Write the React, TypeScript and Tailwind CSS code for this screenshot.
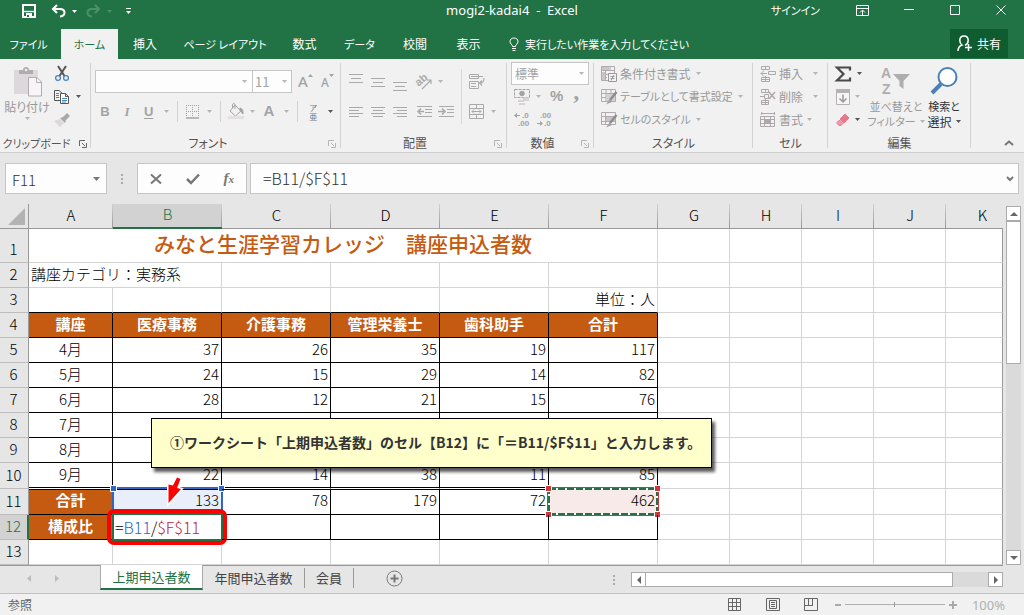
import React from "react";

type Kids = { children?: React.ReactNode };

const UI = "font-['Noto_Sans_CJK_JP','Noto_Sans',sans-serif] [font-feature-settings:'palt']";

function Icon({ w = 16, h = 16, children }: Kids & { w?: number; h?: number }) {
  return (
    <svg width={w} height={h} viewBox={`0 0 ${w} ${h}`} fill="none" stroke="currentColor" className="shrink-0 overflow-visible" aria-hidden="true">
      {children}
    </svg>
  );
}

function Caret({ dark = false }: { dark?: boolean }) {
  return (
    <svg width="5" height="3" viewBox="0 0 5 3" className={dark ? "shrink-0 fill-[#555]" : "shrink-0 fill-[#b5b5b5]"} aria-hidden="true">
      <path d="M0 0H5L2.5 3Z" />
    </svg>
  );
}

function Tool({ label, className = "", children }: Kids & { label: string; className?: string }) {
  return (
    <button type="button" aria-label={label} className={`flex h-[23px] shrink-0 items-center ${className}`}>
      {children}
    </button>
  );
}

function Launcher({ dark = false }: { dark?: boolean }) {
  return (
    <button type="button" aria-label="詳細" className={dark ? "absolute right-1 bottom-1 text-[#666]" : "absolute right-[5px] bottom-1 text-[#b5b5b5]"}>
      <Icon w={8} h={8}>
        <path d="M0.5 6V0.5H6M3 3L6 6M7.5 3V7.5H3" />
      </Icon>
    </button>
  );
}

function Group({ label, width, launcher, children }: Kids & { label: string; width: string; launcher?: "dark" | "light" }) {
  return (
    <section aria-label={label} className={`relative flex shrink-0 flex-col ${width}`}>
      <div className="flex h-[72px] pt-[3px]">{children}</div>
      <div className={`flex h-[21px] items-end justify-center leading-[18px] whitespace-nowrap text-[#555] ${label.length > 4 ? "text-[11px]" : "text-xs"}`}>{label}</div>
      {launcher && <Launcher dark={launcher === "dark"} />}
      <div className="absolute top-1 right-0 bottom-1 w-px bg-[#d2d2d2]" />
    </section>
  );
}

function Sep({ tall = false }: { tall?: boolean }) {
  return <div className={tall ? "h-[55px] w-px shrink-0 bg-[#d8d8d8]" : "h-[21px] w-px shrink-0 bg-[#d2d2d2]"} />;
}

function Lines({ y, xs }: { y: number; xs: [number, number][] }) {
  return (
    <Icon>
      {xs.map(([a, b], i) => (
        <path key={i} d={`M${a} ${y + i * 4 - 0.5}H${b}`} />
      ))}
    </Icon>
  );
}

function TitleBar() {
  return (
    <header className="relative flex h-[29px] items-start justify-between text-xs text-white">
      <div className="flex h-[22px] items-center pl-[22px]">
        <button type="button" aria-label="上書き保存">
          <Icon w={14} h={14}>
            <path d="M1 1H13V13H1Z" strokeWidth="2" />
            <path d="M2 7.5H12" strokeWidth="1.4" />
            <path d="M4 9H10V14H4Z" fill="white" stroke="none" />
            <path d="M5 11H7V13H5Z" fill="#217346" stroke="none" />
          </Icon>
        </button>
        <button type="button" aria-label="元に戻す" className="ml-[15px] flex items-center gap-[6px]">
          <Icon w={15} h={14}>
            <path d="M6 1L2 5L6 9M2 5H9C15 5 15 12 9 12.5" strokeWidth="2" />
          </Icon>
          <svg width="5" height="3" aria-hidden="true"><path d="M0 0H5L2.5 3Z" fill="white" /></svg>
        </button>
        <button type="button" aria-label="やり直し" className="ml-[9px] flex items-center gap-[6px] text-[#4c9069]">
          <Icon w={15} h={14}>
            <path d="M9 1L13 5L9 9M13 5H6C0 5 0 12 6 12.5" strokeWidth="2" />
          </Icon>
          <svg width="5" height="3" aria-hidden="true"><path d="M0 0H5L2.5 3Z" fill="currentColor" /></svg>
        </button>
        <button type="button" aria-label="クイック アクセス ツール バーのユーザー設定" className="ml-[14px]">
          <Icon w={5} h={7}>
            <path d="M0 0.5H5" />
            <path d="M0 3H5L2.5 6Z" fill="white" stroke="none" />
          </Icon>
        </button>
      </div>
      <h1 className="absolute top-0 left-1/2 -translate-x-1/2 text-[13px] leading-5 font-['Noto_Sans',sans-serif] whitespace-pre">mogi2-kadai4  -  Excel</h1>
      <div className="flex h-5 items-center">
        <button type="button" className="mr-9 text-[11px]">サインイン</button>
        <button type="button" aria-label="リボンの表示オプション" className="mr-[35px]">
          <Icon w={13} h={11}>
            <path d="M0.5 0.5H12.5V10.5H0.5ZM0.5 3.5H12.5M6.5 10V5.5M4 7.5L6.5 5L9 7.5" />
          </Icon>
        </button>
        <button type="button" aria-label="最小化" className="mr-9">
          <Icon w={10} h={10}><path d="M0 4.5H10" /></Icon>
        </button>
        <button type="button" aria-label="最大化" className="mr-9">
          <Icon w={10} h={10}><path d="M0.5 0.5H9.5V9.5H0.5Z" /></Icon>
        </button>
        <button type="button" aria-label="閉じる" className="mr-[18px]">
          <Icon w={10} h={10}><path d="M0.5 0.5L9.5 9.5M9.5 0.5L0.5 9.5" /></Icon>
        </button>
      </div>
    </header>
  );
}

const TABS: [string, string][] = [
  ["挿入", "w-[54px] text-xs"],
  ["ページ レイアウト", "w-[106px] text-[11px]"],
  ["数式", "w-[53px] text-xs"],
  ["データ", "w-[57px] text-[11px]"],
  ["校閲", "w-[54px] text-xs"],
  ["表示", "w-[53px] text-xs"],
];

function TabBar() {
  return (
    <nav aria-label="リボン タブ" className="flex h-[30px] text-xs text-white">
      <button type="button" className="w-[61px] pr-1 text-[11px]">ファイル</button>
      <button type="button" className="w-[57px] bg-[#f1f1f1] text-[11px] text-[#217346]">ホーム</button>
      {TABS.map(([name, width]) => (
        <button key={name} type="button" className={`${width} whitespace-nowrap`}>{name}</button>
      ))}
      <button type="button" className="ml-[14px] flex items-center gap-[6px] text-[11px] whitespace-nowrap">
        <Icon w={10} h={14}>
          <path d="M3.5 9.5C3.5 7.5 1 7 1 4.5C1 2.3 2.8 1 5 1S9 2.3 9 4.5C9 7 6.5 7.5 6.5 9.5ZM3 11.5H7M3.5 13.5H6.5" />
        </Icon>
        <span>実行したい作業を入力してください</span>
      </button>
      <button type="button" className="mr-4 ml-auto flex h-[29px] w-[58px] items-center justify-center gap-1 bg-[#0f5c30]">
        <Icon w={16} h={17}>
          <path d="M1 16C1 12.5 2.5 11 5 10C3.500 9 2.800 7.500 2.800 5.500C2.800 2.800 4.500 1 7 1S11.200 2.800 11.200 5.500C11.200 7.500 10.500 9 8 10.300M8 12.500H15M11.500 9V16" strokeWidth="1.5" />
        </Icon>
        共有
      </button>
    </nav>
  );
}

function ClipboardGroup() {
  return (
    <Group label="クリップボード" width="w-[91px] [&>div:nth-child(2)]:pr-[18px]" launcher="dark">
      <button type="button" className="flex w-[54px] flex-col items-center pt-1 text-xs whitespace-nowrap text-[#999]">
        <Icon w={30} h={31}>
          <path d="M2 4H26V28H2Z" fill="#dcd8dc" stroke="none" />
          <path d="M7 8V4H11C11 0 17 0 17 4H21V8Z" fill="#b0adb0" stroke="none" />
          <circle cx="14" cy="4" r="1.3" fill="#f1f1f1" stroke="none" />
          <path d="M16.500 11.500H25L29.500 16V30H16.500Z" fill="#f8f4f8" stroke="#b0adb0" />
          <path d="M24.500 12V16.500H29" stroke="#b0adb0" />
        </Icon>
        <span className="leading-[19px]">貼り付け</span>
        <span className="pt-px"><Caret /></span>
      </button>
      <div className="flex flex-col">
        <Tool label="切り取り">
          <Icon>
            <path d="M4 0L10.500 10M12 0L5.500 10" stroke="#555" strokeWidth="2" />
            <circle cx="4" cy="12" r="2.400" stroke="#4a86be" strokeWidth="1.300" />
            <circle cx="12" cy="12" r="2.400" stroke="#4a86be" strokeWidth="1.300" />
          </Icon>
        </Tool>
        <Tool label="コピー" className="gap-[6px]">
          <Icon>
            <path d="M0.500 1.500H5L8.500 4.500M0.500 1.500V11.500H6" stroke="#555" />
            <path d="M6.500 4.500H11.500L14.500 7.500V14.500H6.500Z" fill="white" stroke="#555" />
            <path d="M11.500 4.500V7.500H14.500" stroke="#555" />
            <path d="M2 4.500H5M2 6.500H5M2 8.500H5M8 9.500H13M8 11.500H13M8 13H12" stroke="#4a86be" />
          </Icon>
          <Caret dark />
        </Tool>
        <Tool label="書式のコピー">
          <Icon>
            <path d="M0 9L6 7L10 11L6 15Z" fill="#dcd8dc" stroke="none" />
            <path d="M6 6L11 11L12 8L16 4L13 1L9 5Z" fill="#aaa7aa" stroke="none" />
          </Icon>
        </Tool>
      </div>
    </Group>
  );
}

function FontGroup() {
  return (
    <Group label="フォント" width="w-[250px] [&>div:nth-child(2)]:pr-4" launcher="light">
      <div className="flex flex-col pt-2 pl-1 text-[#a3a3a3]">
        <div className="flex h-[23px] items-start">
          <div className="flex h-[23px] w-[158px] items-center justify-end border border-[#c6c6c6] bg-[#fdfdfd] pr-[5px]">
            <input aria-label="フォント名" className="min-w-0 flex-1 bg-transparent outline-none" />
            <Caret />
          </div>
          <div className="-ml-px flex h-[23px] w-[40px] items-center border border-[#c6c6c6] bg-[#fdfdfd] pr-1 pl-[2px]">
            <input aria-label="フォント サイズ" defaultValue="11" className="w-6 min-w-0 flex-1 bg-transparent text-[13px] outline-none" />
            <Caret />
          </div>
          <Tool label="拡大" className="ml-[6px] w-[23px]">
            <span className="font-['Noto_Sans',sans-serif] text-[15px] font-medium">A</span>
            <svg width="5" height="3" className="mb-3 fill-[#a3a3a3]" aria-hidden="true"><path d="M0 3H5L2.500 0Z" /></svg>
          </Tool>
          <Tool label="縮小" className="w-5">
            <span className="pt-[2px] font-['Noto_Sans',sans-serif] text-xs font-medium">A</span>
            <svg width="5" height="3" className="mb-3 fill-[#a3a3a3]" aria-hidden="true"><path d="M0 0H5L2.500 3Z" /></svg>
          </Tool>
        </div>
        <div className="mt-[7px] flex h-[23px] items-center font-['Liberation_Sans',sans-serif] text-[13px]">
          <Tool label="太字" className="w-5 justify-center font-bold">B</Tool>
          <Tool label="斜体" className="ml-[2px] w-5 justify-center font-['Liberation_Serif',serif] font-bold italic">I</Tool>
          <Tool label="下線" className="ml-[7px] justify-center gap-[11px] font-bold">
            <span className="underline underline-offset-2">U</span>
            <Caret />
          </Tool>
          <div className="ml-2"><Sep /></div>
          <Tool label="罫線" className="ml-2 gap-[7px]">
            <Icon w={14} h={14}>
              <path d="M0.500 0V12M6.500 0V12M12.500 0V12M0 0.500H13M0 6.500H13" strokeDasharray="1 1" />
              <path d="M0 13H13" strokeWidth="1.500" />
            </Icon>
            <Caret />
          </Tool>
          <div className="ml-2"><Sep /></div>
          <Tool label="塗りつぶしの色" className="ml-[7px] gap-[5px]">
            <Icon w={17} h={17}>
              <path d="M7 2L13 8L7.500 13L2 8ZM7 6V2C7 0 4.500 0 4.500 2V5" />
              <path d="M12 5C15 6 15 8 15 11C13 10 14 8 12 8Z" fill="currentColor" />
              <path d="M0 13H16V16H0Z" fill="#e4dfe2" stroke="none" />
            </Icon>
            <Caret />
          </Tool>
          <Tool label="フォントの色" className="ml-2 gap-[10px]">
            <span className="text-[15px] font-bold">A</span>
            <Caret />
          </Tool>
          <div className="ml-2"><Sep /></div>
          <Tool label="ふりがな" className="ml-[10px] gap-[10px]">
            <span className="flex w-[10px] flex-col items-center font-['Noto_Sans_CJK_JP',sans-serif] text-[8px] leading-[9px] text-[#777]">
              <span>ア</span>
              <span>亜</span>
            </span>
            <Caret dark />
          </Tool>
        </div>
      </div>
    </Group>
  );
}

function AlignGroup() {
  const full: [number, number] = [1, 15];
  const mid: [number, number] = [3, 13];
  return (
    <Group label="配置" width="w-[166px] [&>div:nth-child(2)]:pr-[18px]" launcher="light">
      <div className="flex flex-col gap-[7px] pt-2 pl-[7px] text-[#aaa]">
        <div className="flex items-center">
          <Tool label="上揃え" className="w-[22px]"><Lines y={1} xs={[full, mid, full]} /></Tool>
          <Tool label="上下中央揃え" className="w-[22px]"><Lines y={5} xs={[full, mid, full]} /></Tool>
          <Tool label="下揃え" className="w-6"><Lines y={9} xs={[full, mid, full]} /></Tool>
          <Tool label="方向" className="gap-[5px]">
            <Icon w={17}>
              <text x="0" y="10" fontSize="11" fontFamily="Liberation Sans" fontWeight="bold" fill="currentColor" stroke="none" transform="rotate(-40 5 8)">ab</text>
              <path d="M6 15L15 6M11 6H15V10" strokeWidth="1.200" />
            </Icon>
            <Caret />
          </Tool>
        </div>
        <div className="flex items-center">
          <Tool label="左揃え" className="w-[22px]">
            <Icon><path d="M1 3.500H15M1 6.500H11M1 9.500H15M1 12.500H11" /></Icon>
          </Tool>
          <Tool label="中央揃え" className="w-[22px]">
            <Icon><path d="M1 3.500H15M3 6.500H13M1 9.500H15M3 12.500H13" /></Icon>
          </Tool>
          <Tool label="右揃え" className="w-6">
            <Icon><path d="M1 3.500H15M5 6.500H15M1 9.500H15M5 12.500H15" /></Icon>
          </Tool>
          <Tool label="インデントを減らす" className="w-[22px]">
            <Icon><path d="M1 2.500H16M9 5.500H16M9 8.500H16M1 12.500H16" /><path d="M8 7.500H2M5 4.500L2 7.500L5 10.500" strokeWidth="1.600" /></Icon>
          </Tool>
          <Tool label="インデントを増やす">
            <Icon><path d="M1 2.500H16M9 5.500H16M9 8.500H16M1 12.500H16" /><path d="M0 7.500H6M4 4.500L7 7.500L4 10.500" strokeWidth="1.600" /></Icon>
          </Tool>
        </div>
      </div>
      <div className="ml-[7px] flex text-[#aaa]">
        <div className="pt-[7px]"><Sep tall /></div>
        <div className="flex flex-col gap-[7px] pt-2 pl-[7px]">
          <Tool label="折り返して全体を表示する">
            <Icon>
              <path d="M0.500 0.500H9.500V4.500H0.500ZM2 2.500H14M0.500 7.500H9.500V14.500H0.500ZM2 9.500H7M2 12.500H7" />
              <path d="M15 4C15 8 14 9 11 9M13 6.500L10.500 9L13 11.500" strokeWidth="1.200" />
            </Icon>
          </Tool>
          <Tool label="セルを結合して中央揃え" className="gap-[6px]">
            <Icon>
              <path d="M0.500 0.500H14.500V14.500H0.500ZM0.500 4.500H14.500M0.500 10.500H14.500M7.500 0.500V4.500M7.500 10.500V14.500M3 7.500H12M5 5.500L3 7.500L5 9.500M10 5.500L12 7.500L10 9.500" />
            </Icon>
            <Caret />
          </Tool>
        </div>
      </div>
    </Group>
  );
}

function Decimal({ up }: { up?: boolean }) {
  return (
    <svg width="16" height="15" viewBox="0 0 16 15" fill="currentColor" className="overflow-visible font-['Liberation_Sans',sans-serif] text-[8px] font-bold" aria-hidden="true">
      <text x={up ? 8 : 4} y="6">{up ? ".0" : ".00"}</text>
      <text x={up ? 4 : 8} y="14">{up ? ".00" : ".0"}</text>
      <path d={up ? "M0 3.500L3 1V3H6V4H3V6Z" : "M7 11.500L4 9V11H1V12H4V14Z"} />
    </svg>
  );
}

function NumberGroup() {
  return (
    <Group label="数値" width="w-[87px] [&>div:nth-child(2)]:pr-4" launcher="light">
      <div className="flex flex-col pl-1 text-[#a3a3a3]">
        <div className="relative h-[23px]">
          <select aria-label="表示形式" className="block h-[23px] w-[78px] appearance-none border border-[#c6c6c6] bg-[#fdfdfd] pl-[3px] text-xs outline-none">
            <option>標準</option>
          </select>
          <span className="absolute top-0 right-[5px] flex h-[23px] items-center"><Caret /></span>
        </div>
        <div className="flex h-[23px] items-center">
          <Tool label="通貨表示形式" className="ml-[3px] gap-[6px]">
            <Icon>
              <path d="M0.500 0.500H15.500V8.500H0.500Z" strokeDasharray="3 1" />
              <circle cx="8" cy="4.500" r="2.300" fill="currentColor" />
              <path d="M4 12H10M5 15H11M9 9H15M9 11H15" stroke="#cfcacd" strokeWidth="1.500" />
            </Icon>
            <Caret />
          </Tool>
          <Tool label="パーセント" className="ml-[9px] font-['Liberation_Sans',sans-serif] text-[15px] font-bold">%</Tool>
          <Tool label="桁区切り" className="ml-[10px] pb-3 font-['Liberation_Serif',serif] text-2xl leading-none font-bold">,</Tool>
        </div>
        <div className="flex h-[23px] items-center">
          <Tool label="小数点以下の表示桁数を増やす" className="ml-[3px]"><Decimal up /></Tool>
          <Tool label="小数点以下の表示桁数を減らす" className="ml-[6px]"><Decimal /></Tool>
        </div>
      </div>
    </Group>
  );
}

function StyleGroup() {
  return (
    <Group label="スタイル" width="w-[159px]">
      <div className="flex flex-col pl-[7px] text-[11px] whitespace-nowrap text-[#999]">
        <Tool label="条件付き書式" className="gap-[3px]">
          <Icon>
            <path d="M0.500 0.500H13.500V14.500H0.500ZM0.500 4.500H13.500M0.500 8.500H8M0.500 11.500H6M4.500 0.500V14.500M9 0.500V5" stroke="#b0abae" />
            <path d="M1 1H8V4H1ZM1 6H4V14H1Z" fill="#c9c4c7" stroke="none" />
            <path d="M7.500 7.500H15.500V15.500H7.500Z" fill="#f5f1f4" />
            <path d="M9.500 10.500H13.500M9.500 12.500H13.500M13 9L10 14.500" />
          </Icon>
          <span className="pr-[2px] text-xs">条件付き書式</span>
          <Caret />
        </Tool>
        <Tool label="テーブルとして書式設定" className="gap-[3px]">
          <Icon>
            <path d="M0.500 0.500H14.500V12.500H0.500ZM0.500 4.500H14.500M0.500 8.500H14.500M5 0.500V12.500M10 0.500V12.500" stroke="#b0abae" />
            <path d="M5 5H14V12H5Z" fill="#d4cfd2" stroke="none" />
            <path d="M15.500 3L9 11" stroke="#8f8b8e" strokeWidth="2.500" />
            <path d="M9 10L5 15.500L11 13Z" fill="#a5a0a3" stroke="none" />
          </Icon>
          <span className="pr-[2px]">テーブルとして書式設定</span>
          <Caret />
        </Tool>
        <Tool label="セルのスタイル" className="gap-[3px]">
          <Icon>
            <path d="M0.500 0.500H14.500V12.500H0.500ZM4.500 0.500V12.500M0.500 4.500H14.500M0.500 9.500H14.500" stroke="#b0abae" />
            <path d="M5 5H14V9H5Z" fill="#c9c4c7" stroke="none" />
            <path d="M15.500 3L9 11" stroke="#8f8b8e" strokeWidth="2.500" />
            <path d="M9 10L5 15.500L11 13Z" fill="#a5a0a3" stroke="none" />
          </Icon>
          <span className="pr-[2px]">セルのスタイル</span>
          <Caret />
        </Tool>
      </div>
    </Group>
  );
}

function CellsGroup() {
  return (
    <Group label="セル" width="w-[75px]">
      <div className="flex flex-col pl-[7px] text-xs whitespace-nowrap text-[#999]">
        <Tool label="挿入" className="gap-[3px]">
          <Icon>
            <path d="M1.500 0.500H9.500V3.500H1.500ZM5.500 0.500V3.500M1.500 11.500H9.500V15.500H1.500ZM5.500 10V15.500M1.500 13.500H9.500M8.500 5.500H15.500V8.500H8.500ZM7 7.500H1M4 4.500L1 7.500L4 10.500" stroke="#aca8ab" />
          </Icon>
          <span className="pr-[7px]">挿入</span>
          <Caret />
        </Tool>
        <Tool label="削除" className="gap-[3px]">
          <Icon>
            <path d="M1.500 0.500H8.500V3.500H1.500ZM5.500 0.500V3.500M1.500 11.500H8.500V15.500H1.500ZM5.500 10V15.500M1.500 13.500H8.500M4.500 5.500H8.500V9.500H4.500ZM0 7.500H4" stroke="#aca8ab" />
            <path d="M9 3L15 10M15 3L9 10" stroke="#aca8ab" strokeWidth="1.500" />
          </Icon>
          <span className="pr-[7px]">削除</span>
          <Caret />
        </Tool>
        <Tool label="書式" className="gap-[3px]">
          <Icon>
            <path d="M1.500 1.500H14.500M1.500 0V3M14.500 0V3M0.500 4.500H14.500V14.500H0.500ZM0.500 7.500H14.500M0.500 11.500H14.500M4.500 4.500V14.500M10.500 4.500V14.500" stroke="#aca8ab" />
            <path d="M5 8H10V11H5Z" fill="#aca8ab" stroke="none" />
          </Icon>
          <span className="pr-px">書式</span>
          <Caret />
        </Tool>
      </div>
    </Group>
  );
}

function EditGroup() {
  return (
    <Group label="編集" width="w-[143px]">
      <div className="flex w-[41px] shrink-0 flex-col pl-[7px]">
        <Tool label="オート SUM" className="gap-[5px]">
          <Icon w={17}>
            <path d="M15 4.500V1.500H2L8.500 8L2 14.500H15V11.500" stroke="#4a4a4a" strokeWidth="2.200" />
          </Icon>
          <Caret dark />
        </Tool>
        <Tool label="フィル" className="gap-1 pl-px">
          <Icon w={15}>
            <path d="M0.500 0.500H13.500V15.500H0.500Z" stroke="#b5b1b4" fill="#f8f5f7" />
            <path d="M0 0H14V4H0Z" fill="#b5b1b4" stroke="none" />
            <path d="M7 5.500V13M3.500 9.500L7 13L10.500 9.500" stroke="#999" strokeWidth="1.500" />
          </Icon>
          <Caret />
        </Tool>
        <Tool label="クリア" className="gap-1 pl-px">
          <Icon w={15}>
            <path d="M9 2L13 6L8 11L4 7Z" fill="#e8788c" stroke="#e8788c" />
            <path d="M3.500 8L7 11.500L5 13.500H3L1 11.500V10.500Z" fill="#f09aa9" stroke="#e8788c" />
          </Icon>
          <Caret dark />
        </Tool>
      </div>
      <button type="button" className="flex w-[54px] shrink-0 flex-col items-center pt-1 text-[11px] leading-[15px] whitespace-nowrap text-[#999]">
        <svg width="30" height="30" viewBox="0 0 30 30" fill="#b0adb0" className="font-['Liberation_Sans',sans-serif] text-[14px] font-bold" aria-hidden="true">
          <text x="0" y="12">A</text>
          <text x="1" y="28">Z</text>
          <path d="M12 8H29L22.500 15V23L18.500 20V15Z" />
        </svg>
        <span className="pt-[3px]">並べ替えと</span>
        <span className="flex items-center gap-1">フィルター<Caret /></span>
      </button>
      <button type="button" className="ml-px flex w-10 shrink-0 flex-col items-center pt-1 text-[11px] leading-[15px] whitespace-nowrap text-[#333]">
        <Icon w={28} h={30}>
          <circle cx="17.500" cy="11" r="9" fill="white" stroke="#4a7fb8" strokeWidth="2" />
          <path d="M11 18L2 27" stroke="#4a7fb8" strokeWidth="4" />
        </Icon>
        <span className="pt-[3px]">検索と</span>
        <span className="flex items-center gap-1 text-xs leading-[15px]">選択<Caret dark /></span>
      </button>
    </Group>
  );
}

function Ribbon() {
  return (
    <div className="relative flex h-[94px] border-b border-[#cfcfcf] bg-[#f1f1f1]">
      <ClipboardGroup />
      <FontGroup />
      <AlignGroup />
      <NumberGroup />
      <StyleGroup />
      <CellsGroup />
      <EditGroup />
      <button type="button" aria-label="リボンを折りたたむ" className="mr-[10px] mb-[6px] ml-auto self-end text-[#777]">
        <Icon w={10} h={6}><path d="M1 5L5 1.500L9 5" strokeWidth="2" /></Icon>
      </button>
    </div>
  );
}

function Dots() {
  return (
    <svg width="2" height="10" className="shrink-0 fill-[#aaa]" aria-hidden="true">
      <path d="M0 0H2V2H0ZM0 4H2V6H0ZM0 8H2V10H0Z" />
    </svg>
  );
}

function FormulaBar() {
  return (
    <div className="flex h-[51px] items-start bg-[#e6e6e6] pt-[10px] pr-[5px] pl-[5px] text-[15px] text-[#333]">
      <div className="flex h-[31px] w-[102px] items-center border border-[#c6c6c6] bg-[#fdfdfd] pr-[6px] pl-[6px]">
        <input aria-label="名前ボックス" defaultValue="F11" className="min-w-0 flex-1 bg-transparent pt-[3px] font-light outline-none" />
        <svg width="7" height="4" className="fill-[#777]" aria-hidden="true"><path d="M0 0H7L3.500 4Z" /></svg>
      </div>
      <div className="flex h-[31px] w-[30px] items-center justify-center"><Dots /></div>
      <div className="flex h-[31px] w-[110px] items-center justify-around border border-[#c6c6c6] bg-[#fdfdfd] text-[#777]">
        <button type="button" aria-label="キャンセル">
          <Icon w={12} h={12}><path d="M1 1.500L11 10.500M11 1.500L1 10.500" strokeWidth="2" /></Icon>
        </button>
        <button type="button" aria-label="入力">
          <Icon w={14} h={12}><path d="M1 6L5 10L13 1.500" strokeWidth="2.500" /></Icon>
        </button>
        <button type="button" aria-label="関数の挿入" className="font-['Liberation_Serif',serif] text-[15px] leading-4 font-bold italic">
          f<span className="text-[11px]">x</span>
        </button>
      </div>
      <div className="ml-[3px] flex h-[31px] flex-1 items-center border border-[#c6c6c6] bg-[#fdfdfd] pr-1 pl-3">
        <input aria-label="数式バー" defaultValue="=B11/$F$11" className="min-w-0 flex-1 bg-transparent pb-[2px] text-base font-light outline-none" />
        <span className="text-[#777]"><Icon w={8} h={6}><path d="M1 1L4 4L7 1" strokeWidth="2" /></Icon></span>
      </div>
    </div>
  );
}

const COLS = ["A", "B", "C", "D", "E", "F", "G", "H", "I", "J", "K"];

const ROWS: string[][] = [
  ["講座", "医療事務", "介護事務", "管理栄養士", "歯科助手", "合計"],
  ["4月", "37", "26", "35", "19", "117"],
  ["5月", "24", "15", "29", "14", "82"],
  ["6月", "28", "12", "21", "15", "76"],
  ["7月", "", "", "", "", ""],
  ["8月", "", "", "", "", ""],
  ["9月", "22", "14", "38", "11", "85"],
  ["合計", "133", "78", "179", "72", "462"],
  ["構成比", "", "", "", "", ""],
];

function RowHead({ n, h = "h-[25px]" }: { n: number; h?: string }) {
  const active = n === 12;
  return (
    <th
      scope="row"
      className={`${h} border-r border-b border-b-[#bdbdbd] p-0 pr-px text-center leading-5 font-light ${n === 1 ? "pt-[6px]" : "pb-[2px]"} ${
        active ? "border-r-2 border-r-[#217346] bg-[#d2d2d2] text-[#217346]" : "border-r-[#999] bg-[#e6e6e6] text-black"
      }`}
    >
      {n}
    </th>
  );
}

function Blank({ from }: { from: number }) {
  return (
    <>
      {COLS.slice(from).map((c) => (
        <td key={c} className={`border-r border-b border-b-[#d4d4d4] p-0 ${c === "K" ? "border-r-[#999]" : "border-r-[#d4d4d4]"}`} />
      ))}
    </>
  );
}

function Handle({ at, color }: { at: string; color: string }) {
  return <span className={`absolute size-[7px] border border-white ${at} ${color}`} />;
}

function SourceCell() {
  return (
    <span className="absolute -top-[2px] -right-[2px] -bottom-px -left-px border-2 border-[#2f66c4]">
      <Handle at="-top-1 -left-1" color="bg-[#2f66c4]" />
      <Handle at="-top-1 -right-1" color="bg-[#2f66c4]" />
    </span>
  );
}

function CopiedCell() {
  return (
    <span className="absolute -top-[2px] -right-[2px] -bottom-[2px] -left-[2px] border border-[#c9383f]">
      <svg className="absolute inset-0 size-full overflow-visible" aria-hidden="true">
        <rect x="1" y="1" width="100%" height="100%" className="h-[calc(100%-2px)] w-[calc(100%-2px)]" fill="none" stroke="white" strokeWidth="2" />
        <rect x="1" y="1" width="100%" height="100%" className="h-[calc(100%-2px)] w-[calc(100%-2px)]" fill="none" stroke="#217346" strokeWidth="2" strokeDasharray="7 2" />
      </svg>
      <Handle at="-top-[3px] -left-[3px]" color="bg-[#c9383f]" />
      <Handle at="-top-[3px] -right-[3px]" color="bg-[#c9383f]" />
      <Handle at="-bottom-[3px] -left-[3px]" color="bg-[#c9383f]" />
      <Handle at="-right-[3px] -bottom-[3px]" color="bg-[#c9383f]" />
    </span>
  );
}

function EditingCell() {
  return (
    <>
      <span className="absolute -top-[2px] -right-[2px] -bottom-[2px] -left-px flex items-center border-2 border-[#217346] bg-white pb-px pl-px text-base leading-5">
        <span className="text-black">=</span>
        <span className="text-[#2f66d0]">B11</span>
        <span className="text-black">/</span>
        <span className="text-[#bd2440]">$F$11</span>
      </span>
      <span className="absolute -top-[6px] -right-[6px] -bottom-[6px] -left-[6px] rounded-[7px] border-4 border-[#fe0000]" />
    </>
  );
}

function DataCell({ row, col, text }: { row: number; col: number; text: string }) {
  const heading = row === 4 || (col === 0 && row >= 11);
  const look = heading
    ? "bg-[#c55a11] text-center font-bold text-white"
    : col === 0
      ? "text-center text-black"
      : "pr-[2px] text-right text-black";
  const rule = row === 10 ? "border-b-white shadow-[inset_0_-1px_0_#000]" : "border-b-black";
  const double = row === 11 ? "shadow-[inset_0_1px_0_#000]" : "";
  const fill = row === 11 && col === 1 ? "bg-[#e9effa]" : row === 11 && col === 5 ? "bg-[#f9eaea]" : "";
  return (
    <td className={`relative border-r border-b border-r-black p-0 pb-[3px] leading-5 whitespace-nowrap ${look} ${rule} ${double} ${fill}`}>
      {row === 11 && col === 1 && <SourceCell />}
      {row === 11 && col === 5 && <CopiedCell />}
      {row === 12 && col === 1 && <EditingCell />}
      <span className="relative">{text}</span>
    </td>
  );
}

function Sheet() {
  return (
    <table className="min-w-0 flex-1 table-fixed border-separate border-spacing-0 bg-white text-[15px] font-light font-['Noto_Sans_CJK_JP',sans-serif] [font-feature-settings:normal]">
      <colgroup>
        <col className="w-[29px]" />
        <col className="w-[84px]" />
        <col className="w-[109px]" />
        <col className="w-[109px]" />
        <col className="w-[109px]" />
        <col className="w-[109px]" />
        <col className="w-[109px]" />
        <col className="w-[72px]" />
        <col className="w-[72px]" />
        <col className="w-[72px]" />
        <col className="w-[72px]" />
        <col />
      </colgroup>
      <thead>
        <tr className="bg-[#e6e6e6]">
          <th className="h-[25px] border-r border-b border-[#999] p-0">
            <svg width="17" height="17" className="ml-2 block fill-[#b3b3b3]" aria-hidden="true"><path d="M17 0V17H0Z" /></svg>
          </th>
          {COLS.map((c) => (
            <th
              key={c}
              scope="col"
              className={`p-0 pb-[3px] leading-5 font-light ${
                c === "B"
                  ? "border-b-2 border-b-[#217346] bg-[#d2d2d2] text-[#217346]"
                  : c === "K"
                    ? "border-b border-b-[#999] pl-4 text-black"
                    : "border-b border-b-[#999] text-black"
              } ${c === "K" ? "" : "bg-[linear-gradient(#d0d0d0,#999)] bg-[length:1px_100%] bg-right bg-no-repeat"}`}
            >
              {c}
            </th>
          ))}
        </tr>
      </thead>
      <tbody>
        <tr>
          <RowHead n={1} h="h-[34px]" />
          <td colSpan={6} className="border-r border-b border-[#d4d4d4] p-0 pb-[5px] text-center text-[21px] leading-7 font-medium whitespace-nowrap text-[#c55a11]">
            みなと生涯学習カレッジ　講座申込者数
          </td>
          <Blank from={6} />
        </tr>
        <tr>
          <RowHead n={2} />
          <td colSpan={2} className="border-r border-b border-[#d4d4d4] p-0 pb-[3px] pl-[2px] text-left leading-5 whitespace-nowrap text-black">講座カテゴリ：実務系</td>
          <Blank from={2} />
        </tr>
        <tr>
          <RowHead n={3} />
          {["A", "B", "C", "D", "E"].map((c) => (
            <td key={c} className="border-r border-b border-r-[#d4d4d4] border-b-black p-0" />
          ))}
          <td className="border-r border-b border-r-[#d4d4d4] border-b-black p-0 pr-[2px] pb-[3px] text-right leading-5 whitespace-nowrap text-black">単位：人</td>
          <Blank from={6} />
        </tr>
        {ROWS.map((cells, i) => {
          const row = i + 4;
          return (
            <tr key={row}>
              <RowHead n={row} h={row === 10 || row === 11 ? "h-[26px]" : "h-[25px]"} />
              {cells.map((text, col) => (
                <DataCell key={col} row={row} col={col} text={text} />
              ))}
              <Blank from={6} />
            </tr>
          );
        })}
        <tr>
          <RowHead n={13} />
          <Blank from={0} />
        </tr>
      </tbody>
    </table>
  );
}

function ScrollButton({ label, d, size }: { label: string; d: string; size: string }) {
  return (
    <button type="button" aria-label={label} className={`flex shrink-0 items-center justify-center border border-[#ababab] bg-white ${size}`}>
      <svg width="8" height="8" viewBox="0 0 8 8" className="fill-[#666]" aria-hidden="true"><path d={d} /></svg>
    </button>
  );
}

function Workspace() {
  return (
    <main className="relative flex bg-[#e6e6e6]">
      <Sheet />
      <div className="flex w-[21px] flex-col pt-[2px] pl-[3px]">
        <ScrollButton label="上へスクロール" d="M0 6H8L4 2Z" size="h-[15px] w-[15px]" />
        <div className="w-[15px] flex-1 bg-[#dadada]">
          <div className="h-[143px] w-[15px] border border-[#ababab] bg-white" />
        </div>
        <ScrollButton label="下へスクロール" d="M0 2H8L4 6Z" size="h-[15px] w-[15px]" />
      </div>
      <p className="absolute top-[214px] left-[151px] flex h-[50px] w-[561px] items-center border border-black bg-[#ffffcc] pb-[2px] pl-[18px] text-sm font-bold whitespace-nowrap text-[#333] shadow-[3px_4px_3px_rgba(0,0,0,0.65)] font-['Noto_Sans_CJK_JP',sans-serif] [font-feature-settings:normal]">
        ①ワークシート「上期申込者数」のセル【B12】に「＝B11/$F$11」と入力します。
      </p>
      <svg width="20" height="32" viewBox="0 0 20 32" className="absolute top-[272px] left-[164px]" aria-hidden="true">
        <path d="M13 1.500L9 9.500L4.500 8.500V27L17 13L13 12L16.500 3Z" fill="#fe0000" stroke="white" strokeWidth="3" paintOrder="stroke" />
      </svg>
    </main>
  );
}

function SheetTabs() {
  return (
    <div className="flex h-[29px] items-start border-b border-[#c0c0c0] bg-[#e6e6e6] text-[13px] text-[#444]">
      <div className="flex h-[25px] w-[100px] items-center gap-6 border-t border-[#999] pt-px pl-[27px]">
        <button type="button" aria-label="前のシート" className="text-[#bbb]"><svg width="4" height="7" fill="currentColor" aria-hidden="true"><path d="M4 0V7L0 3.500Z" /></svg></button>
        <button type="button" aria-label="次のシート" className="text-[#bbb]"><svg width="4" height="7" fill="currentColor" aria-hidden="true"><path d="M0 0V7L4 3.500Z" /></svg></button>
      </div>
      <button type="button" className="h-[25px] w-[103px] border-r border-b-2 border-l border-r-[#ababab] border-b-[#217346] border-l-[#ababab] bg-white text-[#217346]">上期申込者数</button>
      <div className="flex h-[25px] flex-1 items-center border-t border-[#999]">
        <button type="button" className="h-5 w-[102px] border-r border-[#999]">年間申込者数</button>
        <button type="button" className="h-5 w-[49px] border-r border-[#999]">会員</button>
        <button type="button" aria-label="新しいシート" className="ml-8 pt-px text-[#777]">
          <Icon w={17} h={17}><circle cx="8.500" cy="8.500" r="7.500" /><path d="M4.500 8.500H12.500M8.500 4.500V12.500" strokeWidth="2" /></Icon>
        </button>
        <div className="mr-4 ml-auto pt-[3px]"><Dots /></div>
        <div className="flex pt-[3px]">
          <ScrollButton label="左へスクロール" d="M6 0V8L2 4Z" size="h-[15px] w-[15px]" />
          <div className="-ml-px h-[15px] w-[308px] border border-[#ababab] bg-white" />
          <div className="h-[15px] w-[35px] bg-[#dadada]" />
          <ScrollButton label="右へスクロール" d="M2 0V8L6 4Z" size="h-[15px] w-[15px]" />
        </div>
      </div>
      <div className="w-[21px]" />
    </div>
  );
}

function StatusBar() {
  return (
    <footer className="flex h-[21px] items-center bg-[#f1f1f1] pr-[19px] pl-2 text-xs text-[#666]">
      <span>参照</span>
      <button type="button" aria-label="標準" className="mr-[25px] ml-auto">
        <Icon w={13} h={13}><path d="M0.500 0.500H12.500V12.500H0.500ZM4.500 0.500V12.500M8.500 0.500V12.500M0.500 4.500H12.500M0.500 8.500H12.500" /></Icon>
      </button>
      <button type="button" aria-label="ページ レイアウト" className="mr-6">
        <Icon w={14} h={13}><path d="M0.500 0.500H13.500V12.500H0.500ZM3.500 2.500H10.500V10.500H3.500ZM5 4.500H9M5 6.500H9M5 8.500H9" /></Icon>
      </button>
      <button type="button" aria-label="改ページ プレビュー" className="mr-[17px]">
        <Icon w={14} h={13}><path d="M0.500 0.500H13.500V12.500H0.500ZM4.500 0.500V7M8.500 0.500V7M0.500 7.500H9" /></Icon>
      </button>
      <button type="button" aria-label="縮小" className="text-[#aaa]"><Icon w={6} h={8}><path d="M0 4H6" strokeWidth="2" /></Icon></button>
      <input
        type="range"
        aria-label="ズーム"
        min={10}
        max={190}
        defaultValue={100}
        className="mx-1 h-[7px] w-[100px] appearance-none bg-transparent [&::-webkit-slider-runnable-track]:h-px [&::-webkit-slider-runnable-track]:bg-[#b0b0b0] [&::-webkit-slider-thumb]:-mt-[2px] [&::-webkit-slider-thumb]:h-[5px] [&::-webkit-slider-thumb]:w-px [&::-webkit-slider-thumb]:appearance-none [&::-webkit-slider-thumb]:bg-[#999]"
      />
      <button type="button" aria-label="拡大" className="text-[#aaa]"><Icon w={8} h={8}><path d="M0 4H8M4 0V8" strokeWidth="2" /></Icon></button>
      <span className="ml-[15px] font-['Noto_Sans',sans-serif] text-[13px] leading-4 text-[#b0b0b0]">100%</span>
    </footer>
  );
}

export default function App() {
  return (
    <div className={`flex min-h-screen flex-col bg-[#f1f1f1] ${UI}`}>
      <div className="bg-[#217346]">
        <TitleBar />
        <TabBar />
      </div>
      <Ribbon />
      <FormulaBar />
      <Workspace />
      <SheetTabs />
      <StatusBar />
    </div>
  );
}
